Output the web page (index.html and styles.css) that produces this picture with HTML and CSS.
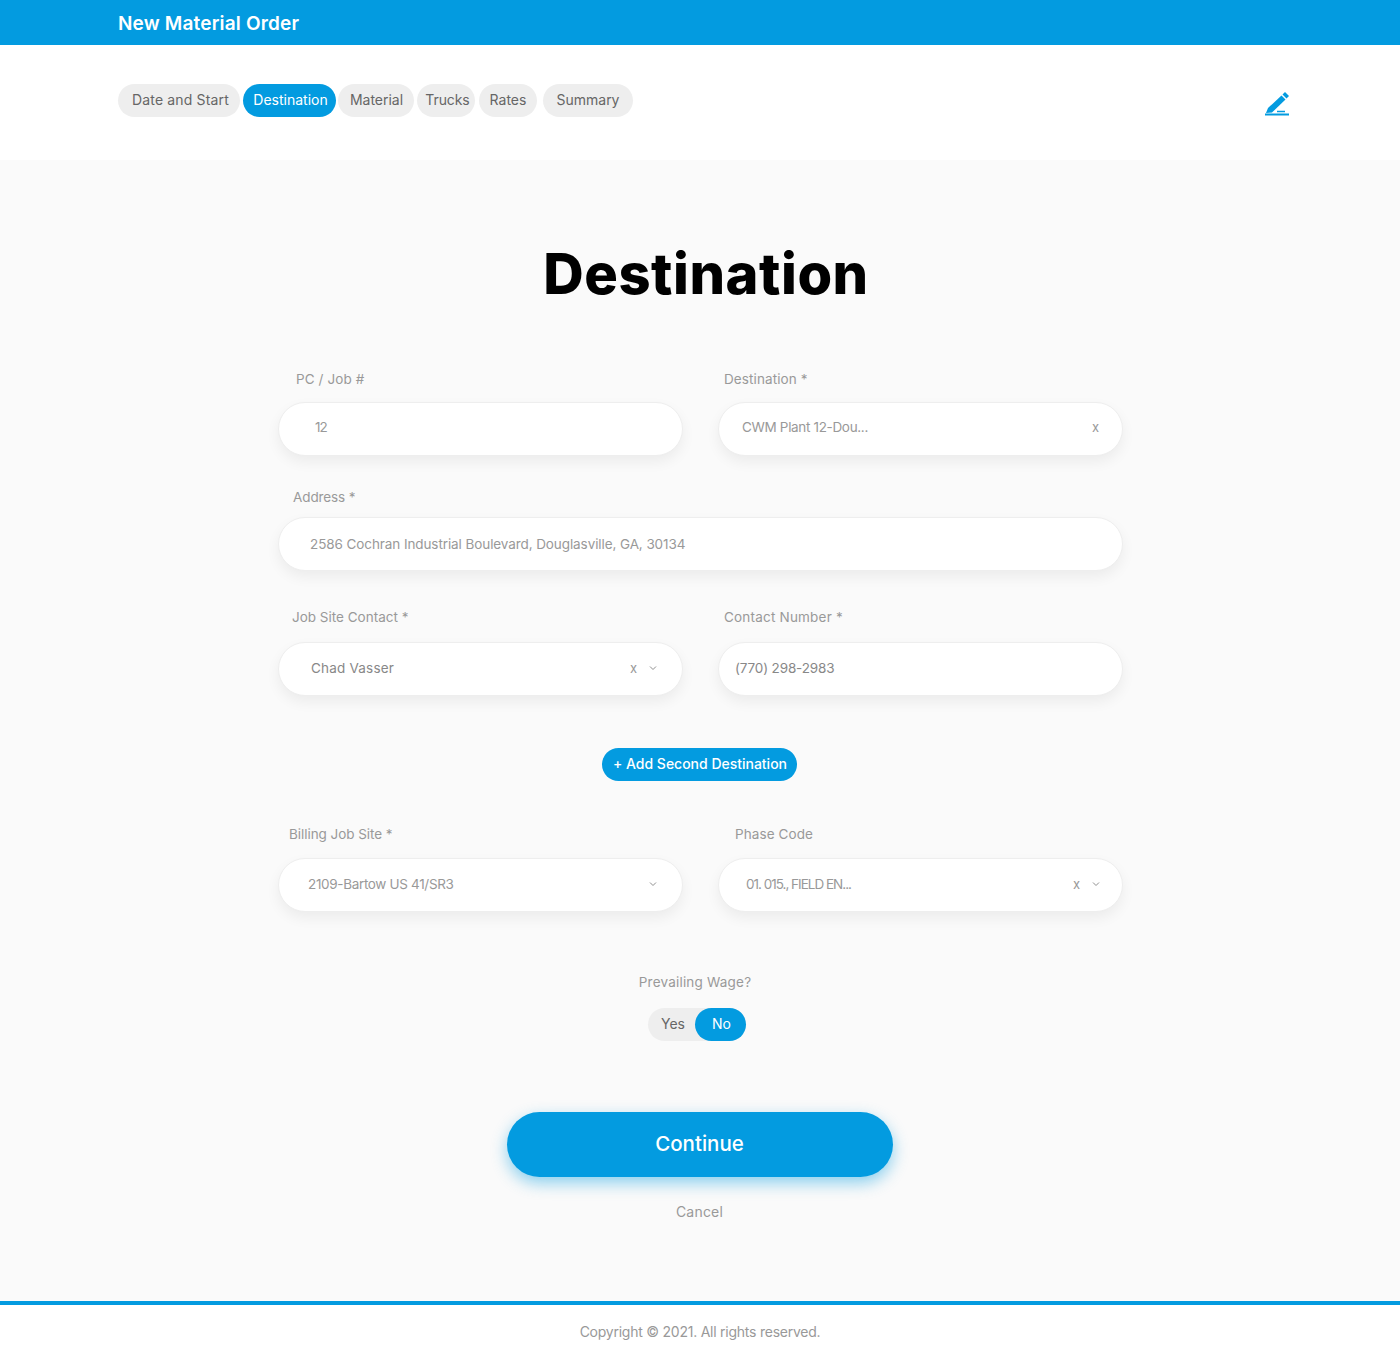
FILE: index.html
```html
<!DOCTYPE html>
<html lang="en">
<head>
<meta charset="utf-8">
<title>New Material Order</title>
<link rel="stylesheet" href="styles.css">
</head>
<body>
<header class="topbar"><h1 class="topbar-title">New Material Order</h1></header>
<nav class="stepbar">
  <ul class="steps">
    <li class="step step-date">Date and Start</li>
    <li class="step step-dest is-active">Destination</li>
    <li class="step step-material">Material</li>
    <li class="step step-trucks">Trucks</li>
    <li class="step step-rates">Rates</li>
    <li class="step step-summary">Summary</li>
  </ul>
  <svg class="edit-icon" viewBox="0 0 26 26" width="26" height="26" aria-hidden="true">
    <path d="M21 1 25 5 22.5 7.5 18.5 3.5Z"/>
    <path d="M17.5 4.5 21.5 8.5 8 21.5 2 22 4 17Z"/>
    <path d="M1 22.5H25V24.5H1ZM13 19.7H21V21.3H13Z"/>
  </svg>
</nav>
<main class="content">
  <h2 class="page-title">Destination</h2>
  <form class="form">
    <div class="row row-first">
      <div class="field">
        <label class="label label-job">PC / Job #</label>
        <div class="box box-job"><span class="value value-job">12</span></div>
      </div>
      <div class="field">
        <label class="label label-dest">Destination *</label>
        <div class="box box-dest"><span class="value value-dest">CWM Plant 12-Dou...</span><span class="clear">x</span></div>
      </div>
    </div>
    <div class="field field-address">
      <label class="label label-address">Address *</label>
      <div class="box box-address"><span class="value value-address">2586 Cochran Industrial Boulevard, Douglasville, GA, 30134</span></div>
    </div>
    <div class="row row-contact">
      <div class="field">
        <label class="label label-contact">Job Site Contact *</label>
        <div class="box box-contact"><span class="value value-contact">Chad Vasser</span><span class="clear">x</span><svg class="chevron" viewBox="0 0 8 6" width="8" height="6"><path d="M1 1.5 4 4.5 7 1.5"/></svg></div>
      </div>
      <div class="field">
        <label class="label label-number">Contact Number *</label>
        <div class="box box-number"><span class="value value-number">(770) 298-2983</span></div>
      </div>
    </div>
    <div class="add-wrap"><button type="button" class="add-btn">+ Add Second Destination</button></div>
    <div class="row row-billing">
      <div class="field">
        <label class="label label-billing">Billing Job Site *</label>
        <div class="box box-billing"><span class="value value-billing">2109-Bartow US 41/SR3</span><svg class="chevron" viewBox="0 0 8 6" width="8" height="6"><path d="M1 1.5 4 4.5 7 1.5"/></svg></div>
      </div>
      <div class="field">
        <label class="label label-phase">Phase Code</label>
        <div class="box box-phase"><span class="value value-phase">01. 015., FIELD EN...</span><span class="clear">x</span><svg class="chevron" viewBox="0 0 8 6" width="8" height="6"><path d="M1 1.5 4 4.5 7 1.5"/></svg></div>
      </div>
    </div>
    <div class="wage">
      <p class="wage-label">Prevailing Wage?</p>
      <div class="toggle"><span class="toggle-yes">Yes</span><span class="toggle-no">No</span></div>
    </div>
    <div class="actions">
      <button type="button" class="continue">Continue</button>
      <a class="cancel">Cancel</a>
    </div>
  </form>
</main>
<footer class="footer">Copyright © 2021. All rights reserved.</footer>
</body>
</html>
```
FILE: styles.css
```css
* { box-sizing: border-box; }
html, body { margin: 0; padding: 0; }
body {
  font-family: "Inter", "Open Sans", sans-serif;
  background: #fff;
  color: #999;
  width: 1400px;
  height: 1361px;
  overflow: hidden;
}
.topbar {
  height: 45px;
  background: #039be0;
  padding-left: 118px;
}
.topbar-title {
  margin: 0;
  font-size: 19px;
  font-weight: 600;
  letter-spacing: 0.17px;
  color: #fff;
  line-height: 47px;
}
.stepbar {
  height: 115px;
  background: #fff;
  padding: 39px 110px 0 118px;
  display: flex;
  justify-content: space-between;
  align-items: flex-start;
}
.steps { list-style: none; margin: 0; padding: 0; display: flex; }
.step {
  height: 33px;
  border-radius: 17px;
  background: #eeeeee;
  color: #666;
  font-size: 14px;
  line-height: 32px;
  text-align: center;
  white-space: nowrap;
}
.step.is-active { background: #039be0; color: #fff; }
.step-date { width: 122px; padding-left: 3px; letter-spacing: 0.15px; }
.step-dest { width: 93px; margin-left: 3px; padding-left: 2px; }
.step-material { width: 76px; margin-left: 2px; padding-left: 1px; }
.step-trucks { width: 58px; margin-left: 3px; padding-left: 3px; letter-spacing: -0.1px; }
.step-rates { width: 58px; margin-left: 4px; }
.step-summary { width: 90px; margin-left: 6px; }
.edit-icon { margin-top: 7px; fill: #039be0; }
.content { height: 1141px; background: #fafafa; padding-top: 80px; }
.page-title {
  margin: 0 0 0 12px;
  text-align: center;
  font-size: 56px;
  font-weight: 800;
  letter-spacing: 0.55px;
  line-height: 68px;
  color: #000;
}
.form { width: 845px; margin: 0 0 0 278px; padding-top: 61px; }
.row { display: grid; grid-template-columns: 405px 405px; column-gap: 35px; }
.field { display: flex; flex-direction: column; }
.label { font-size: 13.5px; letter-spacing: 0.1px; line-height: 20px; color: #999; margin-bottom: 13px; }
.label-job { padding-left: 18px; }
.label-dest { padding-left: 6px; }
.label-address { padding-left: 15px; margin-bottom: 10px; letter-spacing: -0.1px; }
.label-contact { padding-left: 14px; margin-bottom: 15px; letter-spacing: 0; }
.label-number { padding-left: 6px; margin-bottom: 15px; letter-spacing: 0.2px; }
.label-billing { padding-left: 11px; margin-bottom: 14px; letter-spacing: -0.05px; }
.label-phase { padding-left: 17px; margin-bottom: 14px; }
.box {
  height: 54px;
  background: #fff;
  border: 1px solid #eeeeee;
  border-radius: 27px;
  box-shadow: 0 6px 14px rgba(0, 0, 0, 0.06);
  display: flex;
  align-items: center;
  font-size: 13.5px;
  color: #999;
}
.value { flex: 1; white-space: nowrap; }
.value-job { letter-spacing: -1px; }
.value-dest { letter-spacing: -0.33px; }
.value-address { letter-spacing: -0.09px; }
.value-contact { color: #888; letter-spacing: 0.2px; }
.value-number { color: #888; letter-spacing: -0.15px; }
.value-billing { letter-spacing: -0.33px; }
.value-phase { letter-spacing: -1px; }
.clear { font-size: 13px; color: #999; }
.chevron { fill: none; stroke: #8f8f8f; stroke-width: 1; margin-left: 12px; }
.box-job { padding: 0 24px 4px 36px; }
.box-dest { padding: 0 23px 4px 23px; }
.box-address { padding: 0 24px 0 31px; }
.box-contact { padding: 0 25px 2px 32px; }
.box-number { padding: 0 24px 2px 16px; }
.box-billing { padding: 0 25px 2px 29px; }
.box-phase { padding: 0 22px 2px 27px; }
.field-address { margin-top: 31px; }
.row-contact { margin-top: 36px; }
.add-wrap { margin-top: 52px; padding-left: 324px; }
.add-btn {
  display: block;
  width: 195px;
  height: 33px;
  border: 0;
  border-radius: 17px;
  background: #039be0;
  color: #fff;
  font-family: inherit;
  font-size: 14px;
  font-weight: 500;
  padding: 0 0 2px 1px;
  letter-spacing: -0.01px;
}
.row-billing { margin-top: 43px; }
.wage { margin-top: 60px; display: flex; flex-direction: column; align-items: center; padding-right: 11px; }
.wage-label { margin: 0; font-size: 13.5px; letter-spacing: 0.2px; line-height: 20px; color: #999; }
.toggle { margin-top: 16px; height: 33px; width: 98px; margin-left: 3px; background: #eeeeee; border-radius: 17px; display: flex; font-size: 14px; line-height: 32px; text-align: center; color: #666; }
.toggle-yes { width: 47px; padding-left: 4px; }
.toggle-no { width: 51px; background: #039be0; color: #fff; border-radius: 17px; padding-left: 3px; }
.actions { margin-top: 71px; display: flex; flex-direction: column; align-items: center; padding-right: 1px; margin-left: -1px; }
.continue {
  width: 386px;
  height: 65px;
  border: 0;
  border-radius: 33px;
  background: #039be0;
  color: #fff;
  font-family: inherit;
  font-size: 20.5px;
  font-weight: 500;
  padding: 0 0 3px;
  box-shadow: 0 6px 16px rgba(3, 155, 224, 0.45);
}
.cancel { margin-top: 25px; font-size: 14px; letter-spacing: 0.2px; line-height: 20px; color: #999; }
.footer {
  height: 60px;
  border-top: 4px solid #039be0;
  background: #fff;
  text-align: center;
  font-size: 14px;
  letter-spacing: -0.24px;
  line-height: 53px;
  color: #999;
}
```
